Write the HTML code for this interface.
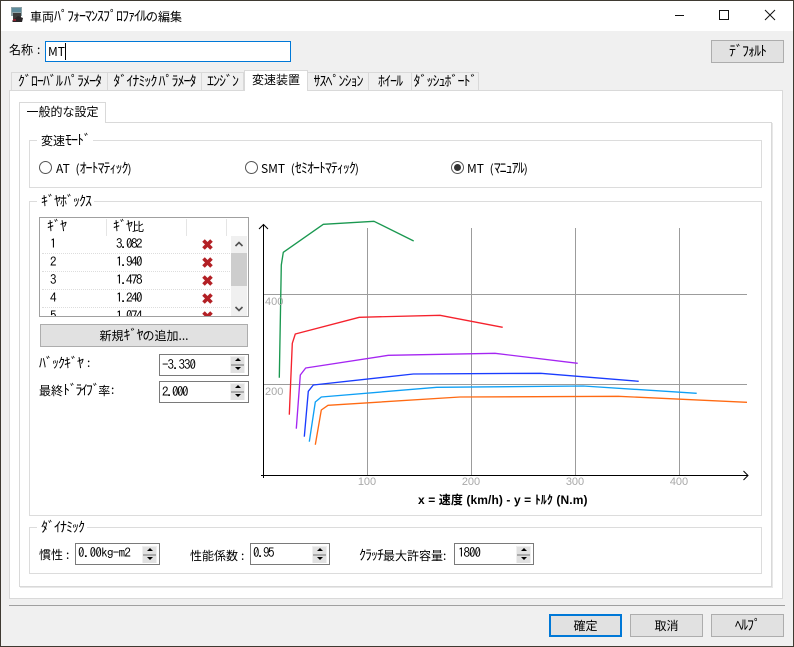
<!DOCTYPE html>
<html lang="ja"><head><meta charset="utf-8">
<style>
html,body{margin:0;padding:0;width:794px;height:647px;overflow:hidden;background:#f0f0f0}
body{position:relative;font:12px/14px "Noto Sans CJK JP","IPAGothic",sans-serif;color:#000}
div,span{position:absolute;box-sizing:border-box}
em{font-style:normal;font-size:14px;letter-spacing:-1px}
em.c{letter-spacing:-1.7px}
.t{white-space:nowrap;line-height:14px}
.r{word-spacing:3px}
.n{font-family:"IPAGothic",monospace;font-size:13px;letter-spacing:-1.5px}
.btn{background:#e1e1e1;border:1px solid #adadad;text-align:center;white-space:nowrap}
.tab{top:72px;height:19px;background:#f0f0f0;border:1px solid #d9d9d9;border-left:0;text-align:center;line-height:17px;white-space:nowrap;font-size:12px}
.grp{left:29px;width:733px;border:1px solid #dcdcdc;background:#fff}
.leg{background:#fff;padding:0 3px 0 4px;white-space:nowrap;height:14px}
.radio{width:13px;height:13px;border:1px solid #555;border-radius:50%;background:#fff}
.inp{background:#fff;border:1px solid #7a7a7a;height:22px;white-space:nowrap;padding:2px 0 0 2px;font-family:"IPAGothic",monospace;font-size:13px;letter-spacing:-1px}
.spin{width:15px;height:17px;background:#f0f0f0}
.spin i{position:absolute;left:1px;width:13px;height:7px;background:#e1e1e1;display:block}
.spin i:first-child{top:1px;border-bottom:1px solid #aaa}
.spin i:last-child{top:9px;border-top:1px solid #aaa}
.spin b{position:absolute;left:4px;width:0;height:0;border-left:3px solid transparent;border-right:3px solid transparent}
.up{top:2px;border-bottom:3px solid #000}
.dn{top:2px;border-top:3px solid #000}
</style></head><body>

<div style="left:0;top:0;width:794px;height:647px;border:1px solid #3f3a32;background:#f0f0f0"></div>
<div style="left:1px;top:1px;width:792px;height:30px;background:#fff"></div>

<svg style="position:absolute;left:10px;top:7px" width="15" height="16" viewBox="0 0 15 16">
<rect x="1" y="0" width="11" height="9" fill="#8fa3a8"/><rect x="2" y="1" width="9" height="4" fill="#5f8c9c"/>
<rect x="3" y="6" width="8" height="7" fill="#3c3c3c"/><path d="M2 14 L8 9 L13 11 L12 15 L3 15Z" fill="#2a2628"/><rect x="3" y="12" width="3" height="2" fill="#8a2030"/>
</svg>
<span class="t" style="left:30px;top:9px">車両<em>ﾊﾟﾌｫｰﾏﾝｽﾌﾟﾛﾌｧｲﾙ</em>の編集</span>

<svg style="position:absolute;left:670px;top:4px" width="110" height="24" viewBox="0 0 110 24" fill="none" stroke="#111" stroke-width="1" shape-rendering="crispEdges">
<path d="M5 11.5H14"/>
<rect x="49.5" y="6.5" width="9" height="9"/>
<path d="M95 6L105 16M105 6L95 16" shape-rendering="auto"/>
</svg>

<span class="t" style="left:9px;top:43px">名称</span><span class="t" style="left:37px;top:43px">:</span>
<div style="left:45px;top:41px;width:246px;height:21px;background:#fff;border:1px solid #0078d7;padding:2px 0 0 2px;font-size:12px;white-space:nowrap;line-height:15px">MT<span style="position:static;border-left:1px solid #000"></span></div>
<div class="btn" style="left:711px;top:40px;width:73px;height:23px;line-height:21px"><em>ﾃﾞﾌｫﾙﾄ</em></div>

<!-- main panel -->
<div style="left:9px;top:90px;width:774px;height:509px;background:#fff;border:1px solid #d9d9d9"></div>
<div class="tab" style="left:11px;width:97px;border-left:1px solid #d9d9d9"><em>ｸﾞﾛｰﾊﾞﾙ ﾊﾟﾗﾒｰﾀ</em></div>
<div class="tab" style="left:108px;width:94px"><em>ﾀﾞｲﾅﾐｯｸ ﾊﾟﾗﾒｰﾀ</em></div>
<div class="tab" style="left:202px;width:42px"><em>ｴﾝｼﾞﾝ</em></div>
<div class="tab" style="left:244px;top:70px;width:64px;height:21px;background:#fff;border-left:1px solid #d9d9d9;border-bottom:0;line-height:18px">変速装置</div>
<div class="tab" style="left:308px;width:61px"><em>ｻｽﾍﾟﾝｼｮﾝ</em></div>
<div class="tab" style="left:369px;width:43px"><em>ﾎｲｰﾙ</em></div>
<div class="tab" style="left:412px;width:67px"><em>ﾀﾞｯｼｭﾎﾞｰﾄﾞ</em></div>

<!-- inner panel -->
<div style="left:19px;top:122px;width:753px;height:465px;background:#fff;border:1px solid #d9d9d9;box-shadow:1px 1px 0 #e8e8e8"></div>
<div style="left:19px;top:102px;width:87px;height:21px;background:#fff;border:1px solid #d9d9d9;border-bottom:0;text-align:center;line-height:18px">一般的な設定</div>

<!-- mode group -->
<div class="grp" style="top:140px;height:48px"></div>
<span class="leg" style="left:37px;top:133px">変速<em>ﾓｰﾄﾞ</em></span>
<div class="radio" style="left:39px;top:161px"></div>
<span class="t r" style="left:56px;top:161px">AT (<em>ｵｰﾄﾏﾃｨｯｸ</em>)</span>
<div class="radio" style="left:245px;top:161px"></div>
<span class="t r" style="left:261px;top:161px">SMT (<em>ｾﾐｵｰﾄﾏﾃｨｯｸ</em>)</span>
<div class="radio" style="left:451px;top:161px"></div>
<div style="left:454px;top:164px;width:7px;height:7px;border-radius:50%;background:#333"></div>
<span class="t r" style="left:467px;top:161px">MT (<em>ﾏﾆｭｱﾙ</em>)</span>

<!-- gearbox group -->
<div class="grp" style="top:201px;height:315px"></div>
<span class="leg" style="left:37px;top:194px"><em>ｷﾞﾔﾎﾞｯｸｽ</em></span>

<div style="left:39px;top:217px;width:210px;height:100px;border:1px solid #a0a0a0;background:#fff;overflow:hidden">
  <div style="left:66px;top:1px;width:1px;height:17px;background:#e5e5e5"></div>
  <div style="left:146px;top:1px;width:1px;height:17px;background:#e5e5e5"></div>
  <div style="left:186px;top:1px;width:1px;height:17px;background:#e5e5e5"></div>
  <span class="t" style="left:7px;top:1px"><em>ｷﾞﾔ</em></span>
  <span class="t" style="left:73px;top:1px"><em>ｷﾞﾔ</em>比</span>

  <span class="t n" style="left:10px;top:19px">1</span><span class="t n" style="left:76px;top:19px">3.082</span>
  <span class="t n" style="left:10px;top:37px">2</span><span class="t n" style="left:76px;top:37px">1.940</span>
  <span class="t n" style="left:10px;top:55px">3</span><span class="t n" style="left:76px;top:55px">1.478</span>
  <span class="t n" style="left:10px;top:73px">4</span><span class="t n" style="left:76px;top:73px">1.240</span>
  <span class="t n" style="left:10px;top:91px">5</span><span class="t n" style="left:76px;top:91px">1.074</span>
  <div style="left:2px;top:35px;width:188px;border-top:1px dotted #ddd"></div>
  <div style="left:2px;top:53px;width:188px;border-top:1px dotted #ddd"></div>
  <div style="left:2px;top:71px;width:188px;border-top:1px dotted #ddd"></div>
  <div style="left:2px;top:89px;width:188px;border-top:1px dotted #ddd"></div>
  <svg style="position:absolute;left:160px;top:0" width="16" height="98" viewBox="0 0 16 98" fill="none" stroke="#b32025" stroke-width="3.6">
    <path d="M3.5 22.5L11.5 30.5M11.5 22.5L3.5 30.5"/>
    <path d="M3.5 40.5L11.5 48.5M11.5 40.5L3.5 48.5"/>
    <path d="M3.5 58.5L11.5 66.5M11.5 58.5L3.5 66.5"/>
    <path d="M3.5 76.5L11.5 84.5M11.5 76.5L3.5 84.5"/>
    <path d="M3.5 94.5L11.5 102.5M11.5 94.5L3.5 102.5"/>
  </svg>
  <div style="left:191px;top:18px;width:16px;height:80px;background:#f0f0f0"></div>
  <div style="left:191px;top:35px;width:16px;height:33px;background:#cdcdcd"></div>
  <svg style="position:absolute;left:191px;top:18px" width="16" height="80" viewBox="0 0 16 80" fill="none" stroke="#505050" stroke-width="1.6">
    <path d="M4.5 10L8 6.5L11.5 10"/><path d="M4.5 71L8 74.5L11.5 71"/>
  </svg>
</div>

<div class="btn" style="left:40px;top:324px;width:208px;height:23px;line-height:21px">新規<em>ｷﾞﾔ</em>の追加...</div>

<span class="t" style="left:39px;top:356px"><em>ﾊﾞｯｸｷﾞﾔ</em></span><span class="t" style="left:87px;top:356px">:</span>
<div class="inp" style="left:159px;top:354px;width:90px;padding-top:3px">-3.330</div>
<div class="spin" style="left:230px;top:356px"><i><b class="up" style="top:1px"></b></i><i><b class="dn" style="top:1px"></b></i></div>
<span class="t" style="left:39px;top:383px">最終<em class="c">ﾄﾞﾗｲﾌﾞ</em>率</span><span class="t" style="left:111px;top:383px">:</span>
<div class="inp" style="left:159px;top:381px;width:90px;padding-top:3px;letter-spacing:-1.5px">2.000</div>
<div class="spin" style="left:230px;top:383px"><i><b class="up" style="top:1px"></b></i><i><b class="dn" style="top:1px"></b></i></div>

<!-- graph -->
<svg style="position:absolute;left:255px;top:218px" width="500" height="270" viewBox="255 218 500 270" fill="none">
  <g stroke="#9c9c9c" stroke-width="1" shape-rendering="crispEdges">
    <path d="M367.5 228V476M471.5 228V476M575.5 228V476M679.5 228V476"/>
    <path d="M263 294.5H747M263 384.5H747"/>
  </g>
  <g stroke-width="1.35" stroke-linejoin="round">
    <polyline stroke="#1a9850" points="279.3,377.7 281.3,265 283.3,252.3 323.3,224.3 374,221.3 413.7,241"/>
    <polyline stroke="#f5222d" points="289.3,414.7 292.3,343.3 295.3,334 359.3,317.3 440,315.3 502.7,327.3"/>
    <polyline stroke="#a526f2" points="296.3,428.7 300.3,375 305.7,368 388.3,355.3 495,353.3 577.7,363.3"/>
    <polyline stroke="#1a3cff" points="304.3,436.7 308.3,391.3 313.3,385 413.3,374 540.7,373.3 638.7,381.3"/>
    <polyline stroke="#0fa0f5" points="309.3,441.7 315.3,402 321.3,397 436.7,387.3 583.3,386 696.7,393.3"/>
    <polyline stroke="#ff6a13" points="315.3,444.7 321.3,410 328,405.3 460,397 618.3,396.3 747,402.3"/>
  </g>
  <g stroke="#000" stroke-width="1">
    <path d="M263.5 225V478M261 475.5H748" shape-rendering="crispEdges"/>
    <path d="M259 229L263.5 224.5L268 229M743.5 471L748 475.5L743.5 480"/>
  </g>
  <g fill="#a8a8a8" font-family="Liberation Sans, sans-serif" font-size="11">
    <text x="265" y="305">400</text><text x="265" y="395">200</text>
    <text x="367" y="485" text-anchor="middle">100</text><text x="471" y="485" text-anchor="middle">200</text>
    <text x="575" y="485" text-anchor="middle">300</text><text x="679" y="485" text-anchor="middle">400</text>
  </g>
</svg>
<span class="t" style="left:418px;top:493px;font:bold 12px/14px 'Liberation Sans','Noto Sans CJK JP',sans-serif;letter-spacing:.1px">x = 速度 (km/h) - y = ﾄﾙｸ (N.m)</span>

<!-- dynamic group -->
<div class="grp" style="top:527px;height:47px"></div>
<span class="leg" style="left:37px;top:520px"><em>ﾀﾞｲﾅﾐｯｸ</em></span>

<span class="t" style="left:39px;top:548px">慣性</span><span class="t" style="left:66px;top:548px">:</span>
<div class="inp" style="left:75px;top:543px;width:85px;letter-spacing:-.7px">0.00kg-m2</div>
<div class="spin" style="left:142px;top:546px"><i><b class="up" style="top:1px"></b></i><i><b class="dn" style="top:1px"></b></i></div>
<span class="t" style="left:190px;top:549px">性能係数</span><span class="t" style="left:241px;top:549px">:</span>
<div class="inp" style="left:250px;top:543px;width:80px;letter-spacing:-1.5px">0.95</div>
<div class="spin" style="left:312px;top:546px"><i><b class="up" style="top:1px"></b></i><i><b class="dn" style="top:1px"></b></i></div>
<span class="t" style="left:359px;top:548px"><em>ｸﾗｯﾁ</em>最大許容量:</span>
<div class="inp" style="left:454px;top:543px;width:80px;padding-left:3px">1800</div>
<div class="spin" style="left:516px;top:546px"><i><b class="up" style="top:1px"></b></i><i><b class="dn" style="top:1px"></b></i></div>

<!-- footer -->
<div style="left:9px;top:605px;width:776px;height:1px;background:#a0a0a0"></div>
<div class="btn" style="left:549px;top:614px;width:73px;height:23px;border:2px solid #0078d7;line-height:19px">確定</div>
<div class="btn" style="left:630px;top:614px;width:73px;height:23px;line-height:21px">取消</div>
<div class="btn" style="left:711px;top:614px;width:73px;height:23px;line-height:21px"><em>ﾍﾙﾌﾟ</em></div>
</body></html>
